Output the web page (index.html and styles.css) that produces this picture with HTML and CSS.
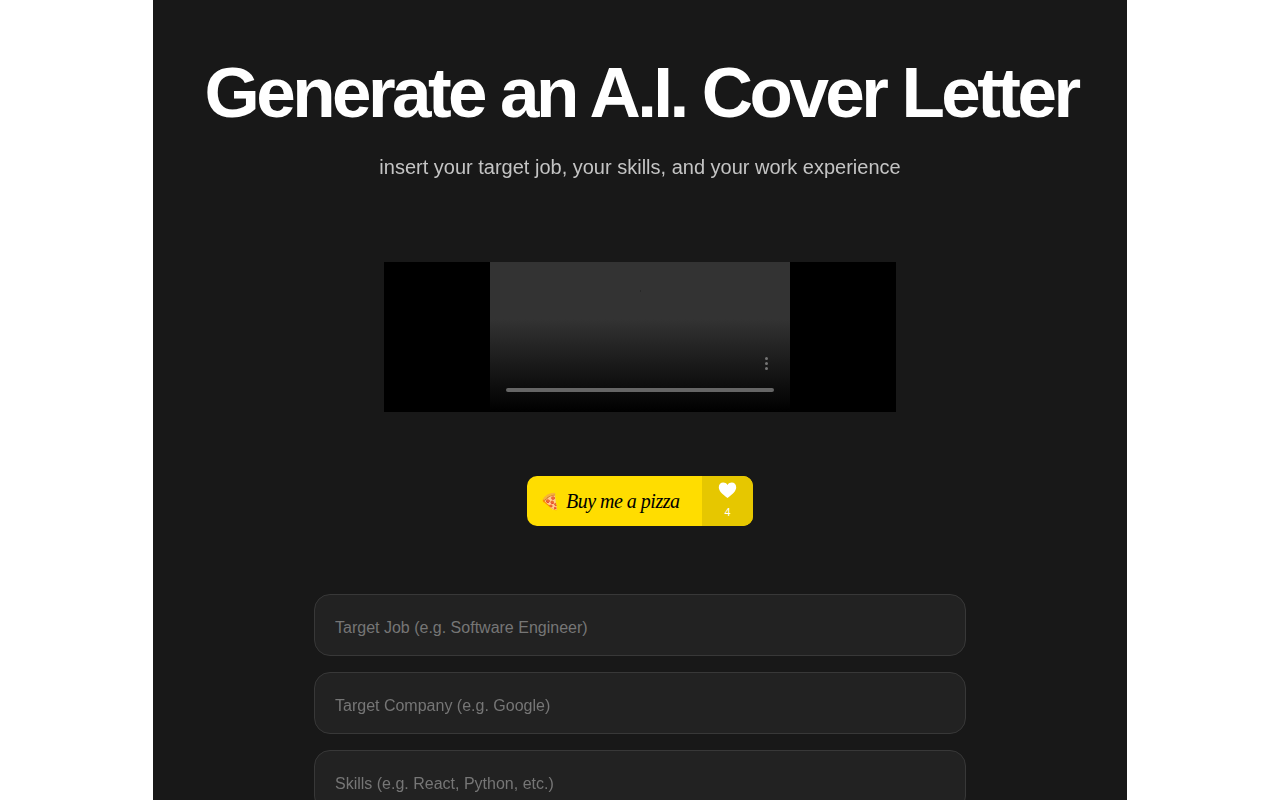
FILE: index.html
```html
<!DOCTYPE html>
<html lang="en">
<head>
<meta charset="utf-8">
<title>Generate an A.I. Cover Letter</title>
<link rel="stylesheet" href="styles.css">
</head>
<body>
<main class="page">
  <h1 class="title">Generate an A.I. Cover Letter</h1>
  <p class="subtitle">insert your target job, your skills, and your work experience</p>
  <div class="video">
    <div class="player">
      <span class="player-speck"></span>
      <div class="player-dots"><span class="dot"></span><span class="dot"></span><span class="dot"></span></div>
      <div class="player-bar"></div>
    </div>
  </div>
  <a class="pizza" href="#">
    <span class="pizza-main"><span class="pizza-emoji">🍕</span><span class="pizza-text">Buy me a pizza</span></span>
    <span class="pizza-like">
      <svg class="heart" viewBox="0 0 24 24" aria-hidden="true"><path d="M12 21.5C5 16 1 12.4 1 7.8 1 4.500 3.500 2 6.600 2 8.700 2 10.800 3.100 12 5c1.200-1.900 3.300-3 5.400-3C20.500 2 23 4.500 23 7.800c0 4.600-4 8.200-11 13.700z"/></svg>
      <span class="count">4</span>
    </span>
  </a>
  <form class="fields">
    <input class="field" type="text" placeholder="Target Job (e.g. Software Engineer)">
    <input class="field" type="text" placeholder="Target Company (e.g. Google)">
    <input class="field" type="text" placeholder="Skills (e.g. React, Python, etc.)">
  </form>
</main>
</body>
</html>
```
FILE: styles.css
```css
* { box-sizing: border-box; }
html, body { margin: 0; height: 800px; overflow: hidden; background: #fff; }
body { font-family: "Liberation Sans", Arial, sans-serif; }
.page {
  width: 974px;
  margin: 0 auto;
  height: 800px;
  overflow: hidden;
  background: #181818;
  display: flex;
  flex-direction: column;
  align-items: center;
  padding-top: 53px;
}
.title {
  margin: 0;
  padding-left: 2px;
  font-size: 71px;
  line-height: 80px;
  font-weight: 700;
  letter-spacing: -3.55px;
  color: #fff;
  white-space: nowrap;
  flex: none;
  will-change: opacity;
}
.subtitle {
  margin: 20px 0 0;
  font-size: 20px;
  line-height: 28px;
  color: #c4c4c4;
  flex: none;
  will-change: opacity;
}
.video {
  margin-top: 81px;
  width: 512px;
  height: 150px;
  flex: none;
  background: #000;
  display: flex;
  justify-content: center;
}
.player {
  position: relative;
  width: 300px;
  height: 150px;
  background: linear-gradient(to bottom, #333 0, #333 38%, #1a1a1a 68%, #000 100%);
}
.player-speck {
  position: absolute;
  left: 150px;
  top: 28px;
  width: 1px;
  height: 2px;
  background: #282828;
}
.player-dots {
  position: absolute;
  right: 22px;
  top: 95px;
  display: flex;
  flex-direction: column;
  gap: 2px;
}
.dot { width: 3px; height: 3px; border-radius: 50%; background: #747474; }
.player-bar {
  position: absolute;
  left: 16px;
  right: 16px;
  top: 126px;
  height: 4px;
  border-radius: 2px;
  background: #666;
}
.pizza {
  margin-top: 64px;
  width: 226px;
  height: 50px;
  flex: none;
  border-radius: 10px;
  overflow: hidden;
  display: flex;
  text-decoration: none;
  background: #ffdd00;
}
.pizza-main {
  flex: 1;
  min-width: 0;
  display: flex;
  align-items: center;
  gap: 6px;
  padding-left: 13px;
}
.pizza-emoji { font-size: 16px; font-family: "Noto Color Emoji", sans-serif; }
.pizza-text {
  font-family: "Liberation Serif", serif;
  font-style: italic;
  font-size: 20px;
  letter-spacing: -0.5px;
  color: #000;
  white-space: nowrap;
}
.pizza-like {
  width: 51px;
  flex: none;
  background: #e6c700;
  display: flex;
  flex-direction: column;
  align-items: center;
  padding-top: 5px;
}
.heart { width: 19px; height: 19px; fill: #fff; }
.count { font-size: 11px; line-height: 12px; margin-top: 6px; color: #fff; }
.fields {
  margin-top: 68px;
  width: 652px;
  flex: none;
  display: flex;
  flex-direction: column;
  gap: 16px;
  will-change: opacity;
}
.field {
  width: 100%;
  height: 62px;
  padding: 6px 20px 0;
  border: 1px solid #383838;
  border-radius: 16px;
  background: #222;
  color: #fff;
  font-family: inherit;
  font-size: 16px;
  outline: none;
}
.field::placeholder { color: #767676; opacity: 1; }
```
